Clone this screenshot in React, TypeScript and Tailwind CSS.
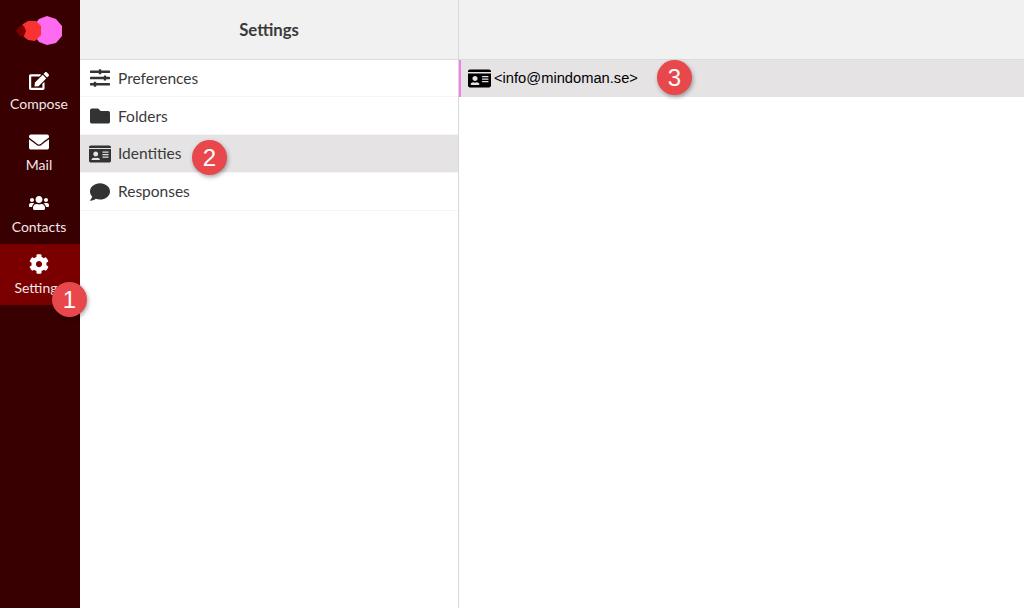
import { FaEdit, FaEnvelope, FaUsers, FaCog, FaSlidersH, FaFolder, FaIdCard, FaComment } from "react-icons/fa";
import type { ReactNode } from "react";

function Badge({ n, className }: { n: number; className: string }) {
  return (
    <div className={"absolute flex h-[35px] w-[35px] items-center justify-center rounded-full bg-[#e8474c] text-[24px] leading-none text-white shadow-[1px_2px_4px_rgba(0,0,0,0.35)] [font-family:'Liberation_Sans',sans-serif] " + className}>
      {n}
    </div>
  );
}

function Nav({ icon, label, active }: { icon: ReactNode; label: string; active?: boolean }) {
  return (
    <div className={"flex h-[61.2px] flex-col items-center pr-[2px] pt-[8px] text-[14px] leading-[20px] text-[#f3e6ea] " + (active ? "bg-[#7a0000]" : "")}>
      <div className="flex h-[24px] items-center text-[20px] text-white">{icon}</div>
      <span className="mt-[1.6px]">{label}</span>
    </div>
  );
}

function Row({ icon, label, active, h = "h-[38px]", size = "text-[20px]", ml = "", pt = "pt-[2px]" }: { icon: ReactNode; label: string; active?: boolean; h?: string; size?: string; ml?: string; pt?: string }) {
  return (
    <div className={"flex items-center border-b border-[#f5f5f5] pl-[10px] text-[15.5px] text-[#3a3a3a] " + h + " " + (active ? "bg-[#e5e3e4]" : "")}>
      <span className={"flex w-[28px] justify-start text-[#333333] " + size + " " + ml}>{icon}</span>
      <span className={pt}>{label}</span>
    </div>
  );
}

export default function App() {
  return (
    <div className="relative flex h-[608px] w-[1024px] overflow-hidden bg-white [font-family:Lato,sans-serif]">
      <aside className="flex w-[80px] shrink-0 flex-col bg-[#380000]">
        <div className="flex h-[60.6px] items-start justify-center pt-[15px]">
          <svg width="48" height="32" viewBox="0 0 48 32">
            <polygon points="31,1 40,4 46,11 46,21 40,28 31,30 23,27 18,20 18,10 23,4" fill="#ff6bf0" />
            <polygon points="12,6 20,6 25,11 25,20 19,26 12,25 7,21 5,15 7,9" fill="#f93232" />
            <polygon points="4,11 8,11 10,16 8,21 4,21 0,16" fill="#800000" />
          </svg>
        </div>
        <Nav icon={<FaEdit />} label="Compose" />
        <Nav icon={<FaEnvelope />} label="Mail" />
        <Nav icon={<FaUsers />} label="Contacts" />
        <Nav icon={<FaCog />} label="Settings" active />
      </aside>

      <section className="flex w-[379px] shrink-0 flex-col border-r border-[#d8d8d8]">
        <header className="flex h-[60px] items-center justify-center border-b border-[#dcdcdc] bg-[#f1f1f1] pt-[2px] text-[16.7px] font-bold text-[#3a3a3a]">
          Settings
        </header>
        <Row icon={<FaSlidersH />} label="Preferences" h="h-[37px]" />
        <Row icon={<FaFolder />} label="Folders" />
        <Row icon={<FaIdCard />} label="Identities" active size="text-[22px]" ml="-ml-[1px] mr-[1px]" pt="" />
        <Row icon={<FaComment />} label="Responses" pt="" />
      </section>

      <main className="flex min-w-0 flex-1 flex-col">
        <div className="h-[60px] border-b border-[#dcdcdc] bg-[#f1f1f1]" />
        <div className="flex h-[37px] items-center gap-[3px] border-l-2 border-[#f27cf0] bg-[#e5e3e4] pl-[7px] text-[14.7px] text-black [font-family:'Liberation_Sans',sans-serif]">
          <FaIdCard className="text-[23px]" />
          <span>&lt;info@mindoman.se&gt;</span>
        </div>
      </main>

      <Badge n={1} className="left-[52px] top-[282px]" />
      <Badge n={2} className="left-[192px] top-[140px]" />
      <Badge n={3} className="left-[657px] top-[60px]" />
    </div>
  );
}
